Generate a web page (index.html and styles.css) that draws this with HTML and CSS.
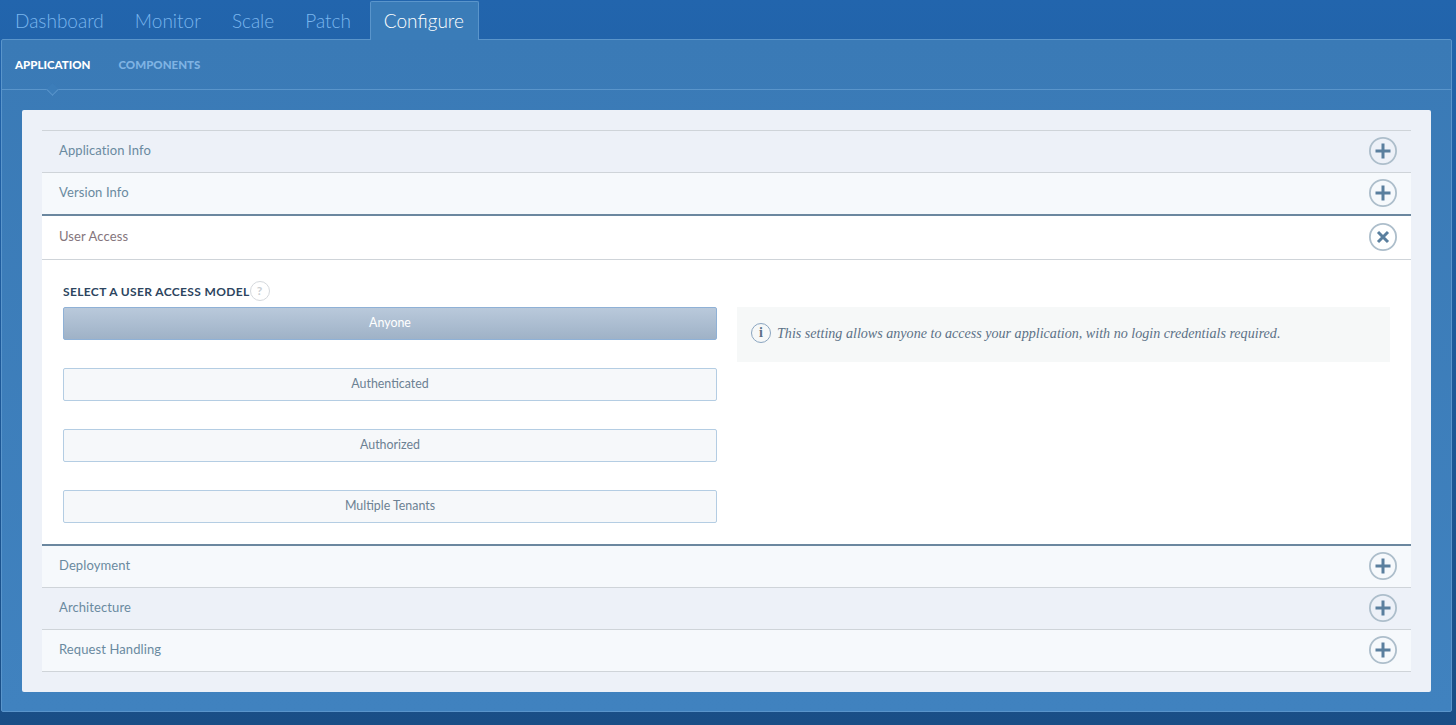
FILE: index.html
```html
<!DOCTYPE html>
<html lang="en">
<head>
  <meta charset="UTF-8">
  <title>Configure</title>
  <link rel="stylesheet" href="styles.css">
</head>
<body>
  <nav class="tabs">
    <a class="tab">Dashboard</a>
    <a class="tab">Monitor</a>
    <a class="tab">Scale</a>
    <a class="tab">Patch</a>
    <a class="tab active">Configure</a>
  </nav>

  <main class="panel">
    <div class="subnav">
      <a class="subtab active">APPLICATION</a>
      <a class="subtab">COMPONENTS</a>
    </div>

    <div class="card">
      <div class="row">
        <span>Application Info</span>
        <svg class="toggle" viewBox="0 0 30 30"><circle cx="15" cy="15" r="13.1"/><path d="M7.5 15H22.5M15 7.5V22.5"/></svg>
      </div>
      <div class="row alt">
        <span>Version Info</span>
        <svg class="toggle" viewBox="0 0 30 30"><circle cx="15" cy="15" r="13.1"/><path d="M7.5 15H22.5M15 7.5V22.5"/></svg>
      </div>

      <section class="open">
        <div class="row open-head">
          <span>User Access</span>
          <svg class="toggle" viewBox="0 0 30 30"><circle cx="15" cy="15" r="13.1"/><path d="M10 10L20 20M20 10L10 20"/></svg>
        </div>
        <div class="open-body">
          <div class="models">
            <h4 class="models-title">SELECT A USER ACCESS MODEL<span class="help">?</span></h4>
            <button class="model selected"><span>Anyone</span></button>
            <button class="model"><span>Authenticated</span></button>
            <button class="model"><span>Authorized</span></button>
            <button class="model"><span>Multiple Tenants</span></button>
          </div>
          <div class="note">
            <span class="note-icon">i</span>
            <em>This setting allows anyone to access your application, with no login credentials required.</em>
          </div>
        </div>
      </section>

      <div class="row alt after-open">
        <span>Deployment</span>
        <svg class="toggle" viewBox="0 0 30 30"><circle cx="15" cy="15" r="13.1"/><path d="M7.5 15H22.5M15 7.5V22.5"/></svg>
      </div>
      <div class="row">
        <span>Architecture</span>
        <svg class="toggle" viewBox="0 0 30 30"><circle cx="15" cy="15" r="13.1"/><path d="M7.5 15H22.5M15 7.5V22.5"/></svg>
      </div>
      <div class="row alt last">
        <span>Request Handling</span>
        <svg class="toggle" viewBox="0 0 30 30"><circle cx="15" cy="15" r="13.1"/><path d="M7.5 15H22.5M15 7.5V22.5"/></svg>
      </div>
    </div>
  </main>
</body>
</html>
```

FILE: styles.css
```css
/* Page */
html, body {
  height: 100%;
}

body {
  margin: 0;
  height: 725px;
  overflow: hidden;
  box-sizing: border-box;
  padding: 1px 4px 0 1px;
  background: linear-gradient(#2265ad, #194e86);
  font-family: 'Lato', sans-serif;
}

/* Top tabs */
.tabs {
  display: flex;
  height: 38px;
}

.tab {
  padding: 0 15.5px;
  font-size: 19px;
  font-weight: 300;
  line-height: 39px;
  color: #7ab6ee;
}

.tab:first-child {
  padding-left: 14px;
}

.tab.active {
  margin: 0 0 -1px 3.5px;
  padding: 0 14px 0 13px;
  position: relative;
  line-height: 37px;
  color: #fff;
  background-color: #3a7cb8;
  border: 1px solid #5a95cb;
  border-bottom: 0;
  border-radius: 2px 2px 0 0;
}

/* Blue panel */
.panel {
  height: 673px;
  box-sizing: border-box;
  background: linear-gradient(#3a7ab6, #4082bf);
  border: 1px solid #5a95cb;
  border-radius: 2px;
}

.subnav {
  position: relative;
  display: flex;
  gap: 28px;
  height: 49px;
  padding-left: 13px;
  border-bottom: 1px solid #5a95cb;
}

.subnav::after {
  content: '';
  position: absolute;
  left: 46px;
  bottom: -5px;
  width: 8px;
  height: 8px;
  background-color: #3c7db9;
  border-right: 1px solid #5a95cb;
  border-bottom: 1px solid #5a95cb;
  transform: rotate(45deg);
}

.subtab {
  font-size: 11.5px;
  font-weight: 900;
  line-height: 49px;
  color: #7fb3e3;
}

.subtab.active {
  color: #fff;
}

/* White card */
.card {
  margin: 20px 20px 0 20px;
  padding: 20px;
  height: 582px;
  box-sizing: border-box;
  background-color: #edf1f8;
  border-radius: 2px;
}

.row {
  display: flex;
  justify-content: space-between;
  align-items: center;
  height: 42px;
  box-sizing: border-box;
  padding: 0 13px 0 17px;
  font-size: 13px;
  letter-spacing: 0.1px;
  color: #6a8aa0;
  border-top: 1px solid #cfd4d9;
}

.row span {
  padding-bottom: 4px;
}

.row.alt {
  background-color: #f6f9fc;
}

.row.last {
  border-bottom: 1px solid #cfd4d9;
  height: 43px;
}

.row.after-open {
  border-top: 0;
  height: 41px;
}

.toggle {
  width: 30px;
  height: 30px;
  margin-top: -1px;
  fill: none;
}

.toggle circle {
  stroke: #adbecb;
  stroke-width: 1.8;
}

.toggle path {
  stroke: #5a7f9e;
  stroke-width: 3;
}

/* Expanded section */
.open {
  background-color: #fff;
  border-top: 2px solid #6b879f;
  border-bottom: 2px solid #6b879f;
}

.row.open-head {
  height: 44px;
  border-top: 0;
  border-bottom: 1px solid #cfd4d9;
  color: #84757c;
}

.open-body {
  display: flex;
  gap: 20px;
  height: 284px;
  box-sizing: border-box;
  padding: 20px 21px 0;
}

.models {
  width: 654px;
  flex-shrink: 0;
}

.models-title {
  display: flex;
  align-items: center;
  height: 22px;
  margin: 0 0 5px;
  font-size: 12px;
  font-weight: 700;
  letter-spacing: 0.36px;
  color: #2d4560;
}

.help {
  width: 20px;
  height: 20px;
  box-sizing: border-box;
  text-align: center;
  font-size: 12px;
  line-height: 18px;
  letter-spacing: 0;
  color: #c9ced3;
  border: 1px solid #d5d9dd;
  border-radius: 50%;
}

.model {
  display: block;
  width: 100%;
  height: 33px;
  padding: 0 0 3px;
  margin-bottom: 28px;
  font-family: inherit;
  font-size: 12.4px;
  color: #6c8193;
  background-color: #f6f8fa;
  border: 1px solid #b4cde3;
  border-radius: 2px;
}

.model.selected {
  color: #fff;
  background: linear-gradient(#b9c9db, #9fb2c7);
  border-color: #8fb1d6;
}

.note {
  display: flex;
  align-items: center;
  gap: 6px;
  width: 653px;
  height: 55px;
  margin-top: 27px;
  box-sizing: border-box;
  padding-left: 14px;
  font-family: 'Liberation Serif', serif;
  font-size: 14.1px;
  color: #5c7186;
  background-color: #f6f8f8;
}

.note em {
  padding-bottom: 2px;
}

.note-icon {
  width: 20px;
  height: 20px;
  margin-top: -3px;
  box-sizing: border-box;
  text-align: center;
  font-size: 14px;
  font-weight: 700;
  line-height: 18px;
  color: #5c7186;
  border: 1px solid #8aa5c0;
  border-radius: 50%;
}
```
